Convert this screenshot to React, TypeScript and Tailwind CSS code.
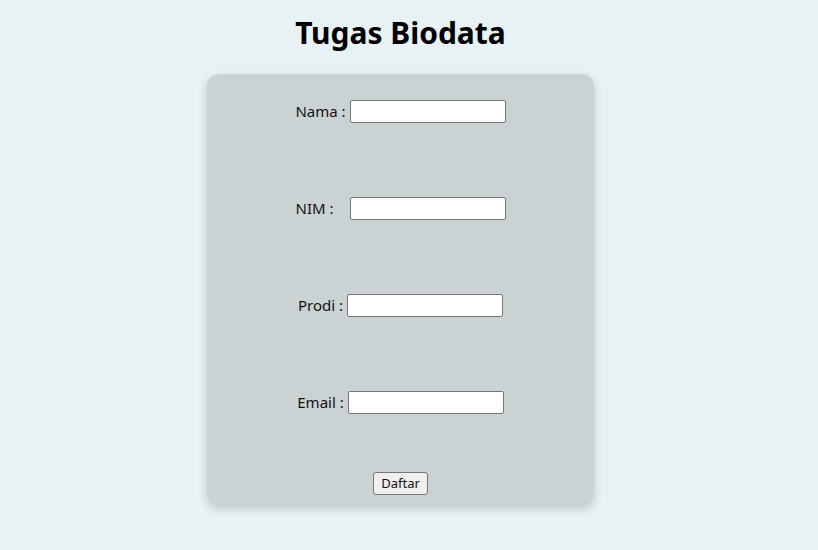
import React from 'react';

const Field: React.FC<{ label: string; labelClass?: string }> = ({ label, labelClass = '' }) => (
  <div className="flex items-center justify-center h-[23px]">
    <span className={`mr-[4px] ${labelClass}`}>{label}</span>
    <input
      type="text"
      className="w-[156px] h-[23px] bg-white border border-[#767676] rounded-[2px] px-1 text-[13px] outline-none"
    />
  </div>
);

export default function App() {
  return (
    <div
      className="min-h-[550px] bg-[#e8f1f3] pr-[17px] flex flex-col items-center text-[15px] text-[#111]"
      style={{ fontFamily: '"Noto Sans", "Open Sans", sans-serif' }}
    >
      <h1 className="mt-[13px] text-[30px] leading-[40px] font-bold text-black">Tugas Biodata</h1>
      <form className="mt-[21px] w-[387px] bg-[#cbd2d4] rounded-[12px] shadow-[0_4px_10px_rgba(0,0,0,0.18)] pt-[26px] pb-[10px] flex flex-col items-center">
        <div className="flex flex-col gap-[74px]">
          <Field label="Nama :" />
          <Field label="NIM :" labelClass="w-[50px]" />
          <Field label="Prodi :" />
          <Field label="Email :" />
        </div>
        <button
          type="button"
          className="mt-[58px] h-[23px] px-[7px] bg-[#efefef] border border-[#767676] rounded-[3px] text-[13px] leading-none"
        >
          Daftar
        </button>
      </form>
    </div>
  );
}
